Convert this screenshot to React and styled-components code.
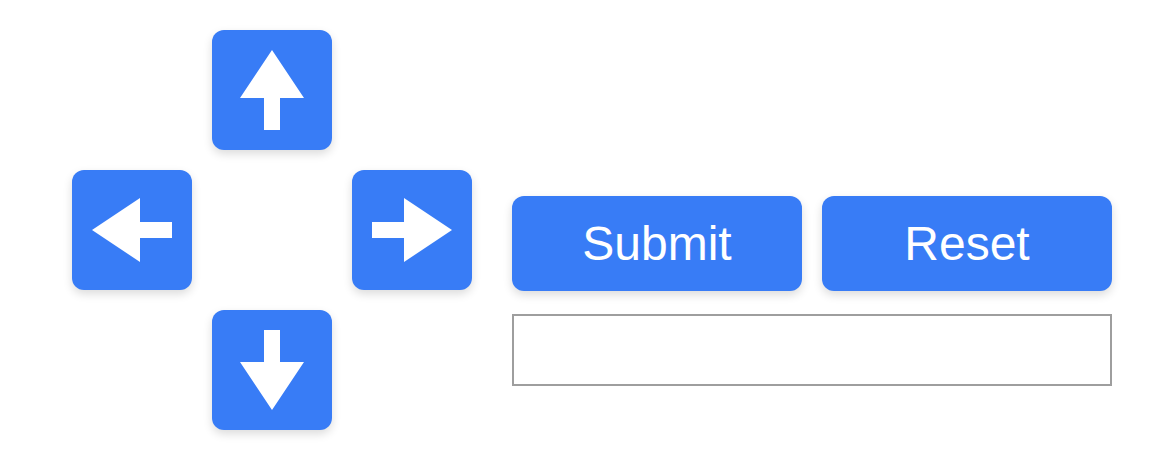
import styled, { createGlobalStyle } from 'styled-components'

const GlobalStyle = createGlobalStyle`
  body {
    margin: 0;
    background: #ffffff;
    font-family: "Liberation Sans", Arial, sans-serif;
  }
`

const arrows = {
  up: 'M60 20 L92 68 L68 68 L68 100 L52 100 L52 68 L28 68 Z',
  down: 'M60 100 L92 52 L68 52 L68 20 L52 20 L52 52 L28 52 Z',
  left: 'M20 60 L68 28 L68 52 L100 52 L100 68 L68 68 L68 92 Z',
  right: 'M100 60 L52 28 L52 52 L20 52 L20 68 L52 68 L52 92 Z',
}

const ArrowButton = ({ dir }) => (
  <PadButton area={dir} aria-label={dir}>
    <svg width="120" height="120" viewBox="0 0 120 120">
      <path d={arrows[dir]} fill="#ffffff" />
    </svg>
  </PadButton>
)

const App = () => {
  return (
    <>
      <GlobalStyle />
      <Page>
        <Pad>
          <ArrowButton dir="up" />
          <ArrowButton dir="left" />
          <ArrowButton dir="right" />
          <ArrowButton dir="down" />
        </Pad>
        <Controls>
          <Actions>
            <ActionButton>Submit</ActionButton>
            <ActionButton>Reset</ActionButton>
          </Actions>
          <Output type="text" />
        </Controls>
      </Page>
    </>
  )
}

const Page = styled.div`
  display: flex;
  align-items: flex-start;
  gap: 40px;
  padding: 30px 72px;
`

const Pad = styled.div`
  display: grid;
  grid-template-columns: repeat(3, 120px);
  grid-template-rows: repeat(3, 120px);
  gap: 20px;
  grid-template-areas:
    '. up .'
    'left . right'
    '. down .';
`

const PadButton = styled.button`
  grid-area: ${({ area }) => area};
  width: 120px;
  height: 120px;
  padding: 0;
  border: none;
  border-radius: 12px;
  background: #387cf6;
  box-shadow: 0 4px 10px rgba(0, 0, 0, 0.14);
  display: flex;
  align-items: center;
  justify-content: center;
  cursor: pointer;

  svg {
    display: block;
  }
`

const Controls = styled.div`
  display: flex;
  flex-direction: column;
  gap: 23px;
  margin-top: 166px;
  width: 600px;
`

const Actions = styled.div`
  display: flex;
  gap: 20px;
`

const ActionButton = styled.button`
  flex: 1;
  height: 95px;
  padding: 0;
  border: none;
  border-radius: 12px;
  background: #387cf6;
  color: #ffffff;
  font-family: "Liberation Sans", Arial, sans-serif;
  font-size: 48px;
  box-shadow: 0 4px 10px rgba(0, 0, 0, 0.14);
  cursor: pointer;
`

const Output = styled.input`
  box-sizing: border-box;
  width: 600px;
  height: 72px;
  margin: 0;
  border: 2px solid #9e9e9e;
  background: #ffffff;
  font-family: "Liberation Sans", Arial, sans-serif;
  font-size: 24px;
  outline: none;
`

export default App
